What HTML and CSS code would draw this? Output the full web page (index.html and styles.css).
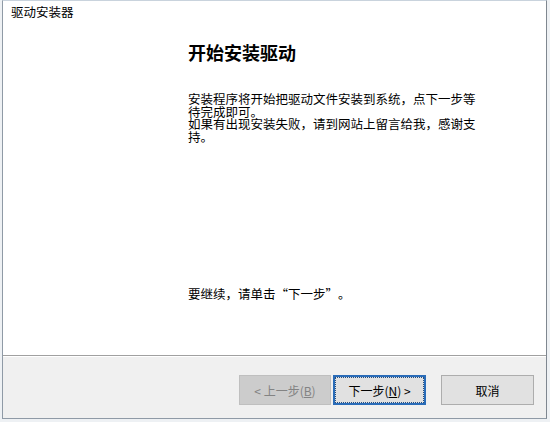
FILE: index.html
```html
<!DOCTYPE html>
<html lang="zh-CN">
<head>
<meta charset="utf-8">
<title>驱动安装器</title>
<link rel="stylesheet" href="styles.css">
</head>
<body>
<div class="window">
  <div class="titlebar">驱动安装器</div>
  <div class="content">
    <h1 class="heading">开始安装驱动</h1>
    <p class="desc">安装程序将开始把驱动文件安装到系统，点下一步等待完成即可。<br>如果有出现安装失败，请到网站上留言给我，感谢支持。</p>
    <p class="hint">要继续，请单击<span class="fw">“</span>下一步<span class="fw">”</span>。</p>
  </div>
  <div class="footer">
    <button class="btn btn-disabled" disabled>&lt; 上一步(<u>B</u>)</button>
    <button class="btn btn-focus">下一步(<u>N</u>) &gt;</button>
    <button class="btn btn-cancel">取消</button>
  </div>
</div>
</body>
</html>
```
FILE: styles.css
```css
html, body {
  margin: 0;
  padding: 0;
  background: #eef1f4;
}
body {
  width: 550px;
  height: 422px;
  overflow: hidden;
  font-family: "Noto Sans CJK SC", "Noto Sans", sans-serif;
  color: #000;
}
.window {
  margin-left: 2px;
  width: 543px;
  height: 417px;
  border: 1px solid #8f9aa6;
  border-top-color: #c9d3dd;
  border-right-color: #7f8790;
  background: #fff;
  display: flex;
  flex-direction: column;
}
.titlebar {
  height: 24px;
  padding-left: 8px;
  font-size: 12.5px;
  line-height: 22px;
  flex: none;
}
.content {
  flex: 1;
  display: flex;
  flex-direction: column;
  padding: 16px 0 54px 185px;
}
.heading {
  margin: 0;
  font-size: 18px;
  line-height: 22px;
  font-weight: bold;
}
.desc {
  margin: 30px 0 0 0;
  width: 292px;
  font-size: 12.5px;
  line-height: 12.5px;
}
.hint {
  margin: auto 0 0 0;
  font-size: 12.5px;
  line-height: 14px;
}
.fw {
  font-feature-settings: "fwid" 1;
  display: inline-block;
  width: 12.5px;
  text-align: center;
}
.footer {
  flex: none;
  height: 63px;
  border-top: 1px solid #a0a0a0;
  box-shadow: inset 0 1px 0 #ffffff;
  background: #f0f0f0;
  display: flex;
  align-items: flex-start;
  justify-content: flex-end;
  padding: 19px 12px 0 0;
  box-sizing: border-box;
}
.btn {
  height: 30px;
  width: 93px;
  margin: 0;
  padding: 0;
  font-family: "Noto Sans CJK SC", "Noto Sans", sans-serif;
  font-size: 12px;
  background: #e1e1e1;
  border: 1px solid #adadad;
  color: #000;
}
.btn u {
  text-decoration-thickness: 1px;
}
.btn-disabled {
  width: 92px;
  background: #cccccc;
  border-color: #bfbfbf;
  color: #838383;
}
.btn-focus {
  margin-left: 2px;
  border: 1px solid #2a6cb8;
  outline: 1px dotted #274f7f;
  outline-offset: -3px;
  box-shadow: inset 0 0 0 1px #2a6cb8;
}
.btn-cancel {
  margin-left: 15px;
}
```
